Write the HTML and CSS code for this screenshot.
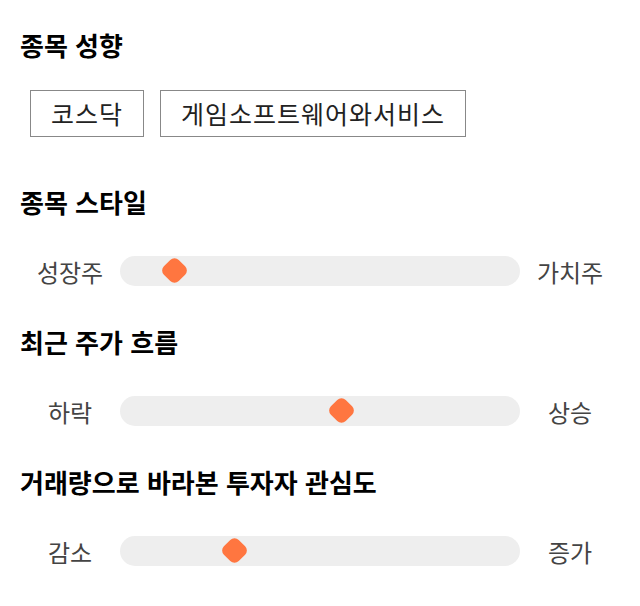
FILE: index.html
```html
<!DOCTYPE html>
<html lang="ko">
<head>
<meta charset="UTF-8">
<meta name="viewport" content="width=device-width, initial-scale=1.0">
<title>종목 분석</title>
<link rel="stylesheet" href="styles.css">
</head>
<body>

<div class="section tag-section">
<h3>종목 성향</h3>
<div class="tags">
<span class="tag">코스닥</span>
<span class="tag">게임소프트웨어와서비스</span>
</div>
</div>

<div class="section">
<h3>종목 스타일</h3>
<div class="slider-row">
<span class="side">성장주</span>
<div class="track"><span class="thumb" style="left: 13.6%"></span></div>
<span class="side">가치주</span>
</div>
</div>

<div class="section">
<h3>최근 주가 흐름</h3>
<div class="slider-row">
<span class="side">하락</span>
<div class="track"><span class="thumb" style="left: 55.3%"></span></div>
<span class="side">상승</span>
</div>
</div>

<div class="section">
<h3>거래량으로 바라본 투자자 관심도</h3>
<div class="slider-row">
<span class="side">감소</span>
<div class="track"><span class="thumb" style="left: 28.4%"></span></div>
<span class="side">증가</span>
</div>
</div>

</body>
</html>
```

FILE: styles.css
```css
body {
font-family: "Noto Sans CJK KR", "Noto Sans", sans-serif;
margin: 0;
padding: 27px 20px 0 20px;
background-color: #fff;
color: #111;
}
.section {
margin-bottom: 38px;
}
.section h3 {
font-size: 26px;
font-weight: bold;
line-height: 36px;
margin: 0 0 36px 0;
color: #000;
}
/* first block with the tag boxes */
.tag-section {
margin-bottom: 47px;
}
.tag-section h3 {
margin-bottom: 27px;
}
.tags {
display: flex;
gap: 16px;
padding-left: 10px;
}
.tag {
border: 1px solid #888;
font-size: 25px;
letter-spacing: 1px;
line-height: 31px;
padding: 7px 20px;
color: #222;
}
/* slider rows */
.slider-row {
display: flex;
align-items: center;
height: 30px;
}
.side {
width: 100px;
text-align: center;
font-size: 24px;
color: #444;
}
.track {
flex: 1;
position: relative;
height: 30px;
background-color: #eee;
border-radius: 15px;
}
.thumb {
position: absolute;
top: 4px;
width: 21px;
height: 21px;
margin-left: -10px;
background-color: #ff7640;
border-radius: 6px;
transform: rotate(45deg);
}
```
